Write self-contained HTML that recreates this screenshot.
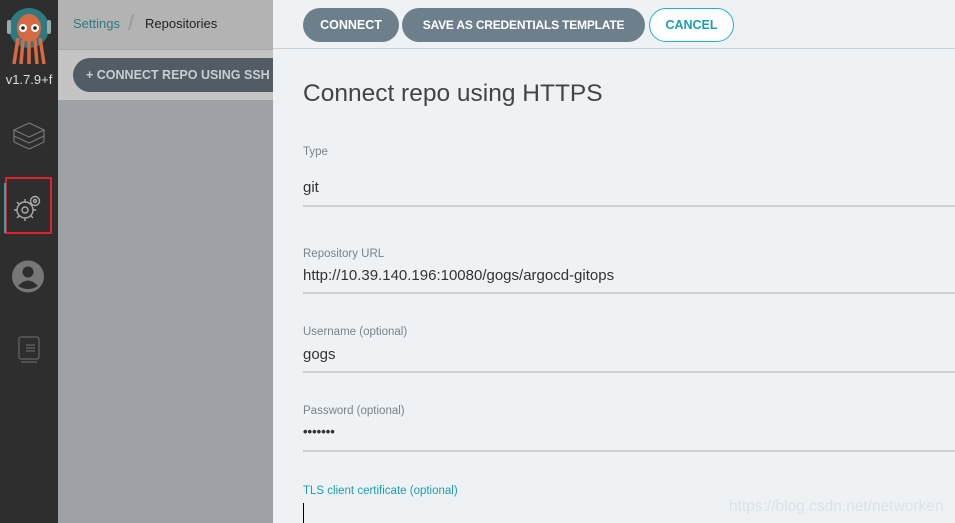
<!DOCTYPE html>
<html><head><style>
body{margin:0;width:955px;height:523px;overflow:hidden;position:relative;font-family:"Liberation Sans",sans-serif;background:#eef2f5}
.sb{position:absolute;left:0;top:0;width:58px;height:523px;background:#2e2e2e}
.mid{position:absolute;left:58px;top:0;width:215px;height:523px;background:#9ea2a6}
.midh{position:absolute;left:0;top:0;width:215px;height:49px;background:#b3b3b3;border-bottom:1px solid #a8a8a8}
.midb{position:absolute;left:0;top:50px;width:215px;height:50px;background:#c4c4c4}
.panel{position:absolute;left:273px;top:0;width:682px;height:523px;background:#eef2f5}
.btn{position:absolute;top:8px;height:34px;border-radius:17px;background:#6d7f8b;color:#fff;font-weight:bold;font-size:12.5px;line-height:34px;text-align:center;white-space:nowrap}
.lbl{position:absolute;left:30px;font-size:11.5px;color:#7a828a}
.val{position:absolute;left:30px;font-size:15px;color:#333}
.ln{position:absolute;left:30px;right:0;height:2px;background:#cfcfcf}
</style></head><body>
<div class="sb">
<svg style="position:absolute;left:4px;top:6px" width="50" height="60" viewBox="0 0 50 60">
<circle cx="25" cy="22" r="20" fill="#2f7a80"/>
<rect x="3" y="14" width="4" height="14" rx="2" fill="#9aa"/><rect x="43" y="14" width="4" height="14" rx="2" fill="#9aa"/>
<ellipse cx="25" cy="22" rx="12" ry="14" fill="#d86a43"/>
<path d="M14 32 L10 58 M19 34 L17 58 M25 34 L25 58 M31 34 L33 58 M36 32 L40 58" stroke="#d86a43" stroke-width="3.5"/>
<circle cx="19" cy="22" r="4" fill="#fff"/><circle cx="31" cy="22" r="4" fill="#fff"/>
<circle cx="19" cy="22" r="1.8" fill="#222"/><circle cx="31" cy="22" r="1.8" fill="#222"/>
</svg>
<div style="position:absolute;left:0;top:72px;width:58px;text-align:center;color:#ddd;font-size:13px">v1.7.9+f</div>
<svg style="position:absolute;left:12px;top:120px" width="34" height="34" viewBox="0 0 34 34" fill="none" stroke="#777" stroke-width="1.2"><path d="M2 10 L17 3 L32 10 L17 17Z"/><path d="M2 16 L17 23 L32 16"/><path d="M2 22 L17 29 L32 22"/><path d="M2 10 V22 M32 10 V22"/></svg>
<div style="position:absolute;left:5px;top:177px;width:47px;height:57px;border:2px solid #e0202a;box-sizing:border-box"></div>
<div style="position:absolute;left:4px;top:183px;width:2px;height:50px;background:#2ab"></div>
<svg style="position:absolute;left:13px;top:193px" width="30" height="30" viewBox="0 0 30 30" fill="none" stroke="#aaa" stroke-width="1.4"><circle cx="12" cy="17" r="8"/><circle cx="12" cy="17" r="3"/><path d="M12 6v3M12 25v3M1 17h3M20 17h3M4 9l2 2M18 23l2 2M4 25l2-2"/><circle cx="22" cy="8" r="4.5"/><circle cx="22" cy="8" r="1.5"/></svg>
<svg style="position:absolute;left:12px;top:260px" width="32" height="33" viewBox="0 0 32 33"><circle cx="16" cy="16.5" r="16" fill="#777"/><circle cx="16" cy="12" r="5.5" fill="#2e2e2e"/><path d="M6 26 Q16 15 26 26 Q16 32 6 26Z" fill="#2e2e2e"/></svg>
<svg style="position:absolute;left:18px;top:336px" width="22" height="28" viewBox="0 0 22 28" fill="none" stroke="#666" stroke-width="1.2"><rect x="1" y="1" width="20" height="22" rx="2"/><path d="M8 9h9M8 12h9M8 15h9M3 26h16"/></svg>
</div>
<div class="mid">
<div class="midh"><span style="position:absolute;left:15px;top:16px;font-size:13px;color:#2f7a80">Settings</span><span style="position:absolute;left:70px;top:10px;font-size:22px;color:#999;font-weight:100">/</span><span style="position:absolute;left:87px;top:16px;font-size:13px;color:#222">Repositories</span></div>
<div class="midb"><div style="position:absolute;left:15px;top:8px;width:215px;height:34px;border-radius:17px;background:#525c64;color:#c8cdd1;font-weight:bold;font-size:12.5px;line-height:34px;padding-left:13px;box-sizing:border-box">+ CONNECT REPO USING SSH</div></div>
</div>
<div class="panel">
<div class="btn" style="left:30px;width:96px">CONNECT</div>
<div class="btn" style="left:129px;width:243px;font-size:12px;letter-spacing:-0.2px">SAVE AS CREDENTIALS TEMPLATE</div>
<div class="btn" style="left:376px;width:83px;height:32px;line-height:32px;background:#fff;border:1px solid #1eb3c6;color:#1a9fb0;font-weight:bold">CANCEL</div>
<div style="position:absolute;left:0;right:0;top:48px;height:1px;background:#ccd3d8"></div>
<div style="position:absolute;left:30px;top:80px;font-size:24.5px;color:#444">Connect repo using HTTPS</div>
<div class="lbl" style="top:146px">Type</div><div class="val" style="top:179px">git</div><div class="ln" style="top:205px"></div>
<div class="lbl" style="top:248px">Repository URL</div><div class="val" style="top:267px">http://10.39.140.196:10080/gogs/argocd-gitops</div><div class="ln" style="top:292px"></div>
<div class="lbl" style="top:326px">Username (optional)</div><div class="val" style="top:346px">gogs</div><div class="ln" style="top:371px"></div>
<div class="lbl" style="top:405px">Password (optional)</div><div class="val" style="top:424px;font-size:13px;font-weight:bold">•••••••</div><div class="ln" style="top:450px"></div>
<div class="lbl" style="top:485px;color:#1a9fb0">TLS client certificate (optional)</div>
<div style="position:absolute;left:30px;top:503px;width:1px;height:20px;background:#000"></div>
<div style="position:absolute;left:456px;top:498px;font-size:15.5px;color:#dde2e6">https://blog.csdn.net/networken</div>
</div>
</body></html>
